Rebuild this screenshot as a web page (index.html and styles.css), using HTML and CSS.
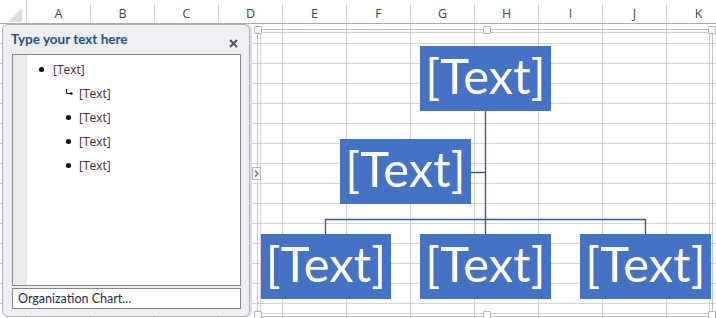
FILE: index.html
```html
<!DOCTYPE html>
<html>
<head>
<meta charset="utf-8">
<link rel="stylesheet" href="styles.css">
</head>
<body>
<div class="sheet">
  <div class="colheads">
    <div class="corner"><svg width="14" height="14" viewBox="0 0 14 14"><polygon points="14,0 14,14 0,14" fill="#dedede"/></svg></div>
    <div class="col">A</div>
    <div class="col">B</div>
    <div class="col">C</div>
    <div class="col">D</div>
    <div class="col">E</div>
    <div class="col">F</div>
    <div class="col">G</div>
    <div class="col">H</div>
    <div class="col">I</div>
    <div class="col">J</div>
    <div class="col">K</div>
  </div>
  <div class="cells"></div>

  <aside class="pane">
    <div class="pane-head">
      <span class="pane-title">Type your text here</span>
      <svg class="close" width="9" height="9" viewBox="0 0 9 9"><path d="M1 1 L8 8 M8 1 L1 8" stroke="#555" stroke-width="2"/></svg>
    </div>
    <div class="listbox">
      <div class="strip"></div>
      <ul class="items">
        <li class="lvl1"><span class="dot"></span><span class="t">[Text]</span></li>
        <li class="lvl2"><svg class="hook" width="7" height="6" viewBox="0 0 7 6"><path d="M0.5 0 V4.5 H5" stroke="#000" stroke-width="1" fill="none"/><circle cx="5.3" cy="4.5" r="1.3" fill="#000"/></svg><span class="t">[Text]</span></li>
        <li class="lvl2"><span class="dot"></span><span class="t">[Text]</span></li>
        <li class="lvl2"><span class="dot"></span><span class="t">[Text]</span></li>
        <li class="lvl2"><span class="dot"></span><span class="t">[Text]</span></li>
      </ul>
    </div>
    <div class="orgbox">Organization Chart...</div>
  </aside>

  <div class="frame">
    <span class="handle h-top"></span>
    <span class="handle h-tr"></span>
    <span class="handle h-tl"></span>
    <span class="handle h-bl"></span>
    <span class="handle h-br"></span>
    <span class="handle h-bot"></span>
    <span class="tab"><svg width="5" height="7" viewBox="0 0 5 7"><path d="M1 0.5 L4 3.5 L1 6.5" stroke="#777" stroke-width="1.5" fill="none"/></svg></span>
    <svg class="links" width="454" height="286" viewBox="0 0 454 286">
      <path d="M227.5 81 V204 M67.5 189.5 H387.5 M67.5 189 V204 M387.5 189 V204 M213 142.5 H228" stroke="#3a5a96" stroke-width="1.4" fill="none"/>
    </svg>
    <div class="node n-top">[Text]</div>
    <div class="node n-asst">[Text]</div>
    <div class="node n-b1">[Text]</div>
    <div class="node n-b2">[Text]</div>
    <div class="node n-b3">[Text]</div>
  </div>
</div>
</body>
</html>
```

FILE: styles.css
```css
html, body {
  margin: 0;
  padding: 0;
  background: #ffffff;
}

.sheet {
  position: relative;
  width: 716px;
  height: 318px;
  overflow: hidden;
  background: #ffffff;
}

.colheads {
  display: flex;
  height: 23px;
  border-bottom: 1px solid #ababab;
  font-family: "Open Sans", "Noto Sans", sans-serif;
  font-size: 12.5px;
  color: #444444;
}

.corner {
  flex: none;
  width: 27px;
  height: 23px;
  box-sizing: border-box;
  border-right: 1px solid #d4d4d4;
  padding: 8px 0 0 8px;
}

.corner svg {
  display: block;
}

.col {
  flex: none;
  width: 64px;
  height: 19px;
  margin-top: 4px;
  box-sizing: border-box;
  border-right: 1px solid #d4d4d4;
  text-align: center;
  line-height: 19px;
}

.cells {
  height: 294px;
  background-image:
    linear-gradient(to right, transparent 63px, #d4d4d4 63px),
    linear-gradient(to bottom, transparent 19px, #d4d4d4 19px);
  background-size: 64px 100%, 100% 20px;
  background-position: 27px 0, 0 0;
}

/* text pane */
.pane {
  position: absolute;
  left: 2px;
  top: 24px;
  width: 248px;
  height: 293px;
  box-sizing: border-box;
  border: 1px solid #a7b2be;
  border-radius: 6px;
  background: #eeeef3;
  padding: 0 8px 7px 9px;
  display: flex;
  flex-direction: column;
  box-shadow: 2px 0 0 #dcdce4;
  font-family: "Open Sans", "Noto Sans", sans-serif;
}

.pane-head {
  height: 29px;
  flex: none;
  display: flex;
  align-items: center;
  justify-content: space-between;
}

.pane-title {
  font-family: Lato, "Open Sans", sans-serif;
  font-weight: 700;
  font-size: 13.5px;
  color: #22508f;
  margin-left: -1px;
  margin-top: -2px;
}

.close {
  margin-right: 3px;
  margin-top: 7px;
}

.listbox {
  height: 232px;
  flex: none;
  box-sizing: border-box;
  border: 1px solid #858585;
  background: #ffffff;
  display: flex;
}

.strip {
  width: 14px;
  flex: none;
  background: #ebebeb;
}

.items {
  list-style: none;
  margin: 0;
  padding: 2px 0 0 0;
  flex: 1;
}

.items li {
  height: 24px;
  display: flex;
  align-items: center;
  font-size: 12px;
  color: #4b1c42;
}

.dot {
  width: 5px;
  height: 5px;
  border-radius: 50%;
  background: #000000;
  flex: none;
}

.lvl1 {
  padding-left: 12px;
}

.lvl1 .dot {
  margin-right: 9px;
}

.lvl2 {
  padding-left: 39px;
}

.lvl2 .dot {
  margin-right: 8px;
}

.hook {
  flex: none;
  margin-right: 6px;
  margin-top: -2px;
}

.orgbox {
  margin-top: 2px;
  height: 21px;
  flex: none;
  box-sizing: border-box;
  border: 1px solid #858585;
  background: #ffffff;
  padding-left: 5px;
  font-family: Lato, "Open Sans", sans-serif;
  font-size: 12.5px;
  line-height: 19px;
  color: #1f2d45;
}

/* smartart frame */
.frame {
  position: absolute;
  left: 257px;
  top: 29px;
  width: 456px;
  height: 288px;
  box-sizing: border-box;
  border: 1px solid #c4c4c4;
}

.frame::before {
  content: "";
  position: absolute;
  left: 2px;
  top: 2px;
  right: 2px;
  bottom: 2px;
  border: 1px solid #d0d0d0;
}

.handle {
  position: absolute;
  width: 6px;
  height: 6px;
  background: #ffffff;
  border: 1px solid #b4b4b4;
  border-radius: 1px;
}

.h-top { left: 225px; top: -4px; }
.h-tr { left: 450px; top: -4px; }
.h-tl { left: -4px; top: -4px; }
.h-bl { left: -4px; top: 281px; }
.h-br { left: 450px; top: 281px; }
.h-bot { left: 225px; top: 281px; }

.tab {
  position: absolute;
  left: -6px;
  top: 137px;
  width: 9px;
  height: 13px;
  box-sizing: border-box;
  background: #f7f7f7;
  border: 1px solid #b4b4b4;
  display: flex;
  align-items: center;
  justify-content: center;
}

.tab svg {
  display: block;
}

.links {
  position: absolute;
  left: 0;
  top: 0;
}

.node {
  position: absolute;
  width: 131px;
  height: 65px;
  box-sizing: border-box;
  padding-bottom: 8px;
  background: #4472c4;
  color: #ffffff;
  font-family: Lato, "Open Sans", sans-serif;
  font-size: 49px;
  display: flex;
  align-items: center;
  justify-content: center;
}

.n-top { left: 162px; top: 16px; }
.n-asst { left: 82px; top: 109px; }
.n-b1 { left: 3px; top: 204px; width: 130px; }
.n-b2 { left: 162px; top: 204px; }
.n-b3 { left: 322px; top: 204px; }
```
